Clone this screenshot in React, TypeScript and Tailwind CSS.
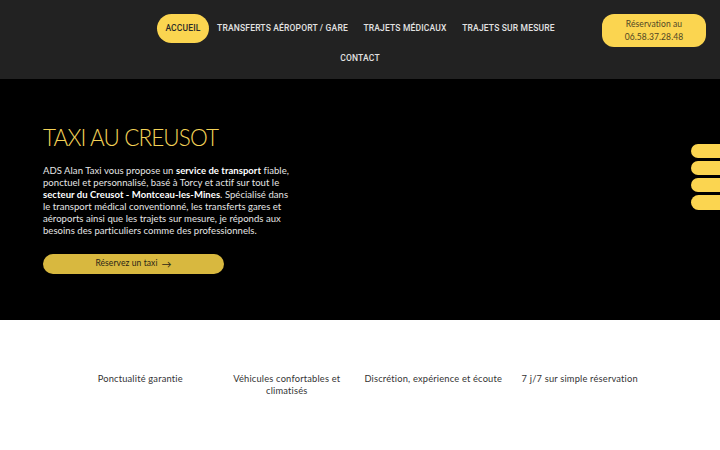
import React from "react";

const font = { fontFamily: "Lato, 'Open Sans', sans-serif" };
const navFont = { fontFamily: "Roboto, Lato, sans-serif" };

type Item = { label: string; w: string; active?: boolean };

function NavItem({ label, w, active }: Item) {
  return (
    <a
      style={navFont}
      className={
        (active
          ? "rounded-full bg-[#fbd550] text-[#2a2a2a] "
          : "text-[#e2e2e2] ") +
        w +
        " h-[29px] flex items-center justify-center whitespace-nowrap text-[8.5px] tracking-[0.02em] font-medium"
      }
    >
      {label}
    </a>
  );
}

const features = [
  "Ponctualité garantie",
  "Véhicules confortables et climatisés",
  "Discrétion, expérience et écoute",
  "7 j/7 sur simple réservation",
];

export default function App() {
  return (
    <div className="w-[720px] h-[450px] bg-white overflow-hidden" style={font}>
      <header className="bg-[#222222] h-[79px] relative">
        <nav className="absolute left-[157px] top-[14px] w-[406px] flex flex-col items-center gap-[1px]">
          <div className="flex">
            <NavItem label="ACCUEIL" w="w-[52px]" active />
            <NavItem label="TRANSFERTS AÉROPORT / GARE" w="w-[147px]" />
            <NavItem label="TRAJETS MÉDICAUX" w="w-[98px]" />
            <NavItem label="TRAJETS SUR MESURE" w="w-[109px]" />
          </div>
          <div className="flex">
            <NavItem label="CONTACT" w="w-[56px]" />
          </div>
        </nav>
        <a className="absolute left-[602px] top-[14px] w-[104px] h-[33px] rounded-[12px] bg-[#fbd550] flex items-center justify-center text-center text-[8.5px] leading-[12.5px] tracking-[0.01em] text-[#4f4524]">
          Réservation au
          <br />
          06.58.37.28.48
        </a>
      </header>

      <section className="bg-black h-[241px] relative">
        <div className="pl-[43px] pt-[45px]">
          <h1 className="text-[22.5px] leading-[28px] text-[#f3d257] tracking-[-0.04em] font-light">
            TAXI AU CREUSOT
          </h1>
          <p className="mt-[13px] text-[9.5px] leading-[12.1px] text-[#e6e6e6] tracking-[0.005em] whitespace-nowrap">
            ADS Alan Taxi vous propose un <b className="font-bold text-white">service de transport</b> fiable,
            <br />
            ponctuel et personnalisé, basé à Torcy et actif sur tout le
            <br />
            <b className="font-bold text-white">secteur du Creusot - Montceau-les-Mines</b>. Spécialisé dans
            <br />
            le transport médical conventionné, les transferts gares et
            <br />
            aéroports ainsi que les trajets sur mesure, je réponds aux
            <br />
            besoins des particuliers comme des professionnels.
          </p>
          <a className="mt-[16px] w-[181px] h-[20px] rounded-full bg-[#d8b83f] flex items-center justify-center text-[8.5px] tracking-[0.01em] text-[#2b2616]">
            Réservez un taxi <span className="ml-[4px] text-[10px] leading-none">→</span>
          </a>
        </div>
        <div className="absolute right-0 top-[65px] flex flex-col gap-[3px]">
          <div className="w-[29px] h-[14px] rounded-l-full bg-[#fbd550]" />
          <div className="w-[29px] h-[14px] rounded-l-full bg-[#fbd550]" />
          <div className="w-[29px] h-[14px] rounded-l-full bg-[#fbd550]" />
          <div className="w-[29px] h-[15px] rounded-l-full bg-[#fbd550]" />
        </div>
      </section>

      <section className="bg-white pt-[53px]">
        <div className="mx-auto w-[586px] grid grid-cols-4">
          {features.map((f, i) => (
            <div
              key={f}
              className={
                "text-center text-[9.3px] leading-[12px] tracking-[0.02em] text-[#333333] " +
                (i === 1 ? "px-[14px]" : "whitespace-nowrap")
              }
            >
              {f}
            </div>
          ))}
        </div>
      </section>
    </div>
  );
}
